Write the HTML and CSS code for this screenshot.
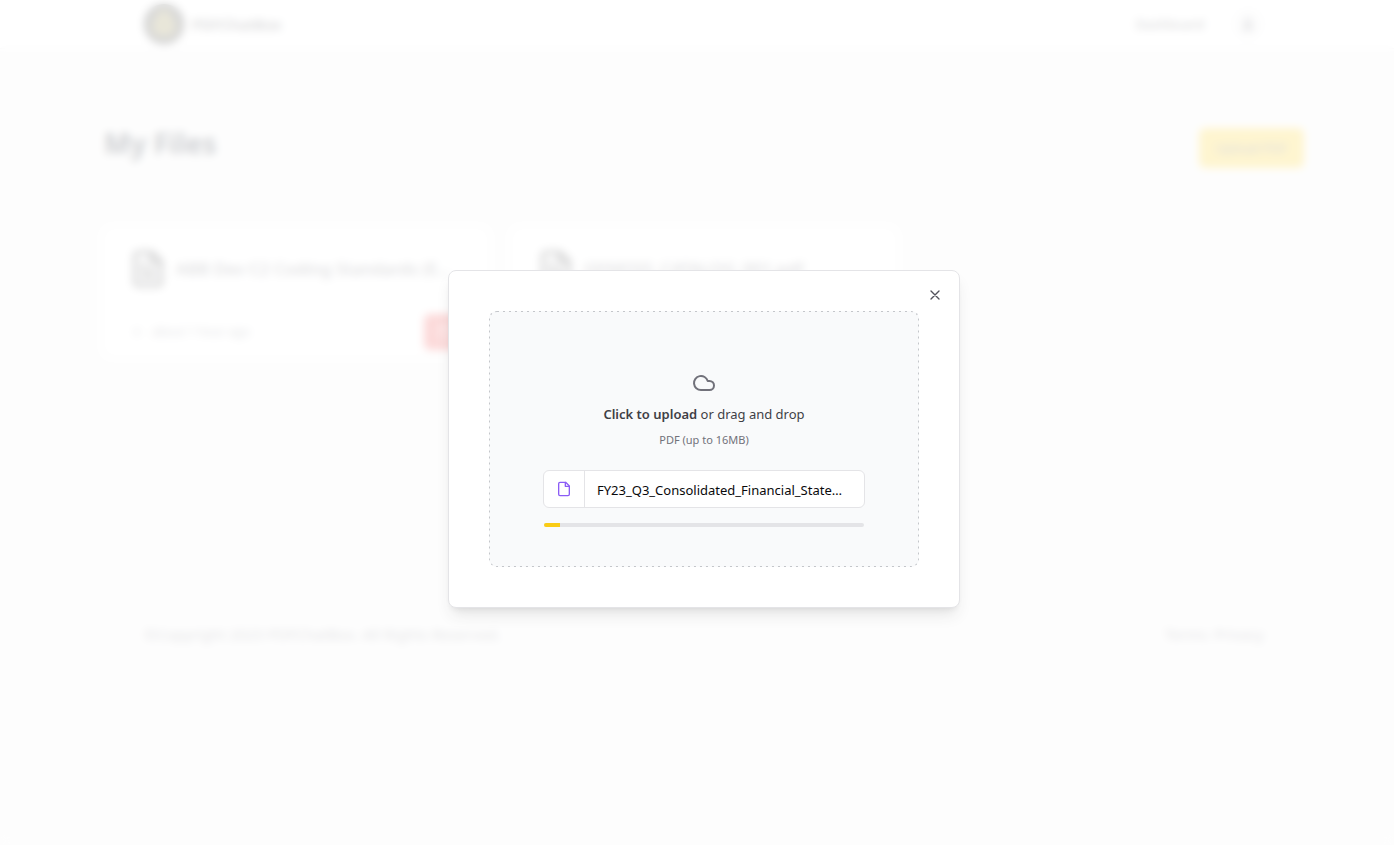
FILE: index.html
```html
<!DOCTYPE html>
<html lang="en">
<head>
    <meta charset="UTF-8">
    <meta name="viewport" content="width=device-width, initial-scale=1.0">
    <title>PDFChatBox</title>
    <link rel="stylesheet" href="styles.css">
</head>
<body>
    <nav class="navbar">
        <div class="wrapper navbar-inner">
            <a href="#" class="brand">
                <svg class="brand-logo" viewBox="0 0 40 40" aria-hidden="true">
                    <circle cx="20" cy="20" r="20" fill="#1c1c1c"/>
                    <circle cx="20" cy="20" r="15" fill="#5a594a"/>
                    <path d="M20 6c6 0 8 5 8 10 4 3 5 8 2 13-3 4-17 4-20 0-3-5-2-10 2-13 0-5 2-10 8-10z" fill="#8f8444"/>
                </svg>
                <span>PDFChatBox</span>
            </a>
            <div class="nav-links">
                <a href="#" class="nav-link">Dashboard</a>
                <button type="button" class="avatar" aria-label="Account">
                    <svg width="14" height="14" viewBox="0 0 24 24" fill="#71717a" aria-hidden="true">
                        <circle cx="12" cy="7" r="5"/>
                        <path d="M3 22c0-6 4-9 9-9s9 3 9 9z"/>
                    </svg>
                </button>
            </div>
        </div>
    </nav>

    <main class="dashboard">
        <div class="dashboard-header">
            <h1>My Files</h1>
            <button type="button" class="upload-btn">Upload PDF</button>
        </div>

        <ul class="file-list">
            <li class="file-card">
                <a href="#" class="file-link">
                    <svg class="file-icon" viewBox="0 0 24 24" aria-hidden="true">
                        <path d="M14.5 2H6a2 2 0 0 0-2 2v16a2 2 0 0 0 2 2h12a2 2 0 0 0 2-2V7.5L14.5 2z"/>
                        <path d="M14 2v6h6M16 13H8M16 17H8M10 9H8"/>
                    </svg>
                    <span class="file-name">ABB Dev C2 Coding Standards (EN).pdf</span>
                </a>
                <div class="file-meta">
                    <span class="file-date">
                        <svg width="14" height="14" viewBox="0 0 24 24" aria-hidden="true"><path d="M12 5v14M5 12h14"/></svg>
                        about 1 hour ago
                    </span>
                    <button type="button" class="delete-btn" aria-label="Delete file">
                        <svg width="16" height="16" viewBox="0 0 24 24" aria-hidden="true"><path d="M3 6h18M19 6v14a2 2 0 0 1-2 2H7a2 2 0 0 1-2-2V6M8 6V4a2 2 0 0 1 2-2h4a2 2 0 0 1 2 2v2"/></svg>
                    </button>
                </div>
            </li>
            <li class="file-card">
                <a href="#" class="file-link">
                    <svg class="file-icon" viewBox="0 0 24 24" aria-hidden="true">
                        <path d="M14.5 2H6a2 2 0 0 0-2 2v16a2 2 0 0 0 2 2h12a2 2 0 0 0 2-2V7.5L14.5 2z"/>
                        <path d="M14 2v6h6M16 13H8M16 17H8M10 9H8"/>
                    </svg>
                    <span class="file-name">GENESIS_CATALOG_001.pdf</span>
                </a>
            </li>
        </ul>
    </main>

    <footer class="wrapper footer">
        <span>©Copyright 2023 PDFChatBox. All Rights Reserved.</span>
        <div class="footer-links">
            <a href="#">Terms</a>
            <a href="#">Privacy</a>
        </div>
    </footer>

    <div class="overlay">
        <div class="dialog" role="dialog" aria-modal="true" aria-label="Upload PDF">
            <button type="button" class="dialog-close" aria-label="Close">
                <svg width="16" height="16" viewBox="0 0 24 24" aria-hidden="true"><path d="M18 6 6 18M6 6l12 12"/></svg>
            </button>
            <div class="dropzone">
                <svg class="dropzone-border" aria-hidden="true"><rect width="100%" height="100%" rx="8"/></svg>
                <svg class="cloud-icon" width="24" height="24" viewBox="0 0 24 24" aria-hidden="true">
                    <path d="M17.5 19H9a7 7 0 1 1 6.71-9h1.79a4.5 4.5 0 1 1 0 9Z"/>
                </svg>
                <p class="drop-text"><strong>Click to upload</strong> or drag and drop</p>
                <p class="drop-hint">PDF (up to 16MB)</p>
                <div class="selected-file">
                    <div class="selected-icon">
                        <svg width="16" height="16" viewBox="0 0 24 24" aria-hidden="true">
                            <path d="M14.5 2H6a2 2 0 0 0-2 2v16a2 2 0 0 0 2 2h12a2 2 0 0 0 2-2V7.5L14.5 2z"/>
                            <path d="M14 2v6h6"/>
                        </svg>
                    </div>
                    <div class="selected-name">FY23_Q3_Consolidated_Financial_Statements.pdf</div>
                </div>
                <div class="progress" role="progressbar" aria-label="Upload progress" aria-valuemin="0" aria-valuemax="100" aria-valuenow="5">
                    <div class="progress-bar" style="width: 5%"></div>
                </div>
            </div>
        </div>
    </div>
</body>
</html>
```
FILE: styles.css
```css
:root {
    --gutter: 14px;
}
* {
    box-sizing: border-box;
}
body {
    margin: 0;
    min-height: 100vh;
    background-color: #f6f6f6;
    color: #18181b;
    font-family: "Segoe UI", "Noto Sans", sans-serif;
    font-size: 15px;
    line-height: 20px;
    padding-left: var(--gutter);
}
h1, p, ul {
    margin: 0;
    padding: 0;
}
a {
    color: inherit;
    text-decoration: none;
}
button {
    font: inherit;
    border: 0;
    padding: 0;
    cursor: pointer;
}
svg {
    flex-shrink: 0;
}
.wrapper {
    max-width: 1280px;
    margin: 0 auto;
    padding: 0 80px;
}

/* navbar */
.navbar {
    margin-left: calc(var(--gutter) * -1);
    padding-left: var(--gutter);
    background-color: #fff;
    border-bottom: 1px solid #e4e4e7;
}
.navbar-inner {
    display: flex;
    justify-content: space-between;
    align-items: center;
    height: 48px;
}
.brand {
    display: flex;
    align-items: center;
    gap: 8px;
    font-weight: 600;
    color: #3f3f46;
}
.brand-logo {
    width: 40px;
    height: 40px;
}
.nav-links {
    display: flex;
    align-items: center;
    gap: 28px;
}
.nav-link {
    font-size: 13px;
    font-weight: 500;
    color: #3f3f46;
}
.avatar {
    display: grid;
    place-items: center;
    width: 32px;
    height: 32px;
    border-radius: 50%;
    background-color: #f4f4f5;
}

/* files */
.dashboard {
    max-width: 1280px;
    margin: 0 auto;
    padding: 79px 40px 0;
}
.dashboard-header {
    display: flex;
    justify-content: space-between;
    align-items: flex-start;
    padding-bottom: 20px;
}
.dashboard-header h1 {
    font-size: 28px;
    line-height: 30px;
    color: #111827;
}
.upload-btn {
    height: 40px;
    padding: 0 17px;
    border-radius: 6px;
    background-color: #facc15;
    font-size: 13px;
    color: #52525b;
}
.file-list {
    display: grid;
    grid-template-columns: repeat(3, 1fr);
    gap: 24px;
    margin-top: 40px;
    list-style: none;
}
.file-card {
    min-width: 0;
    height: 128px;
    border-radius: 8px;
    background-color: #fff;
}
.file-link {
    display: flex;
    align-items: center;
    gap: 8px;
    padding: 20px 36px 18px 24px;
}
.file-icon {
    width: 40px;
    height: 42px;
    color: #18181b;
}
.file-icon,
.file-date svg,
.delete-btn svg,
.dialog-close svg,
.cloud-icon,
.selected-icon svg {
    fill: none;
    stroke: currentColor;
    stroke-width: 2;
    stroke-linecap: round;
    stroke-linejoin: round;
}
.file-name {
    overflow: hidden;
    text-overflow: ellipsis;
    white-space: nowrap;
    font-size: 17px;
    line-height: 28px;
    font-weight: 500;
    color: #52525b;
}
.file-meta {
    display: flex;
    justify-content: space-between;
    align-items: center;
    padding: 6px 24px 6px 26px;
}
.file-date {
    display: flex;
    align-items: center;
    gap: 8px;
    font-size: 12px;
    color: #71717a;
}
.delete-btn {
    display: grid;
    place-items: center;
    width: 40px;
    height: 36px;
    border-radius: 6px;
    background-color: #ef4444;
    color: #fff;
}

/* footer */
.footer {
    display: flex;
    justify-content: space-between;
    margin-top: 268px;
    color: #71717a;
}
.footer-links {
    display: flex;
    gap: 6px;
}

/* upload dialog */
.overlay {
    position: fixed;
    inset: 0;
    display: flex;
    justify-content: center;
    align-items: center;
    padding: 32px 0 0 var(--gutter);
    background-color: rgba(255, 255, 255, 0.8);
    backdrop-filter: blur(4px);
}
.dialog {
    position: relative;
    width: 100%;
    max-width: 512px;
    padding: 40px;
    border: 1px solid #e4e4e7;
    border-radius: 8px;
    background-color: #fff;
    box-shadow: 0 10px 15px -3px rgba(0, 0, 0, 0.1), 0 4px 6px -4px rgba(0, 0, 0, 0.1);
}
.dialog-close {
    position: absolute;
    top: 16px;
    right: 16px;
    display: flex;
    background: none;
    color: #52525b;
}
.dropzone {
    position: relative;
    display: flex;
    flex-direction: column;
    align-items: center;
    padding: 60px 20px 40px;
    border-radius: 8px;
    background-color: #f9fafb;
}
.dropzone-border {
    position: absolute;
    inset: 0;
    width: 100%;
    height: 100%;
    border-radius: 8px;
    pointer-events: none;
}
.dropzone-border rect {
    fill: none;
    stroke: #c4c6ca;
    stroke-width: 2;
    stroke-dasharray: 2 4;
}
.cloud-icon {
    margin-bottom: 9px;
    color: #71717a;
}
.drop-text {
    margin-bottom: 8px;
    font-size: 13px;
    color: #3f3f46;
}
.drop-text strong {
    font-weight: 600;
}
.drop-hint {
    font-size: 11px;
    line-height: 16px;
    color: #71717a;
}
.selected-file {
    display: flex;
    width: 100%;
    max-width: 322px;
    height: 38px;
    margin-top: 22px;
    border: 1px solid #e4e4e7;
    border-radius: 6px;
    background-color: #fff;
    overflow: hidden;
}
.selected-icon {
    display: grid;
    place-items: center;
    width: 41px;
    flex-shrink: 0;
    border-right: 1px solid #e4e4e7;
    color: #8b5cf6;
}
.selected-name {
    min-width: 0;
    padding: 9px 12px;
    overflow: hidden;
    text-overflow: ellipsis;
    white-space: nowrap;
    font-size: 13px;
    line-height: 20px;
    color: #09090b;
}
.progress {
    width: 100%;
    max-width: 320px;
    height: 4px;
    margin-top: 15px;
    border-radius: 2px;
    background-color: #e4e4e7;
    overflow: hidden;
}
.progress-bar {
    height: 100%;
    background-color: #facc15;
}
```
